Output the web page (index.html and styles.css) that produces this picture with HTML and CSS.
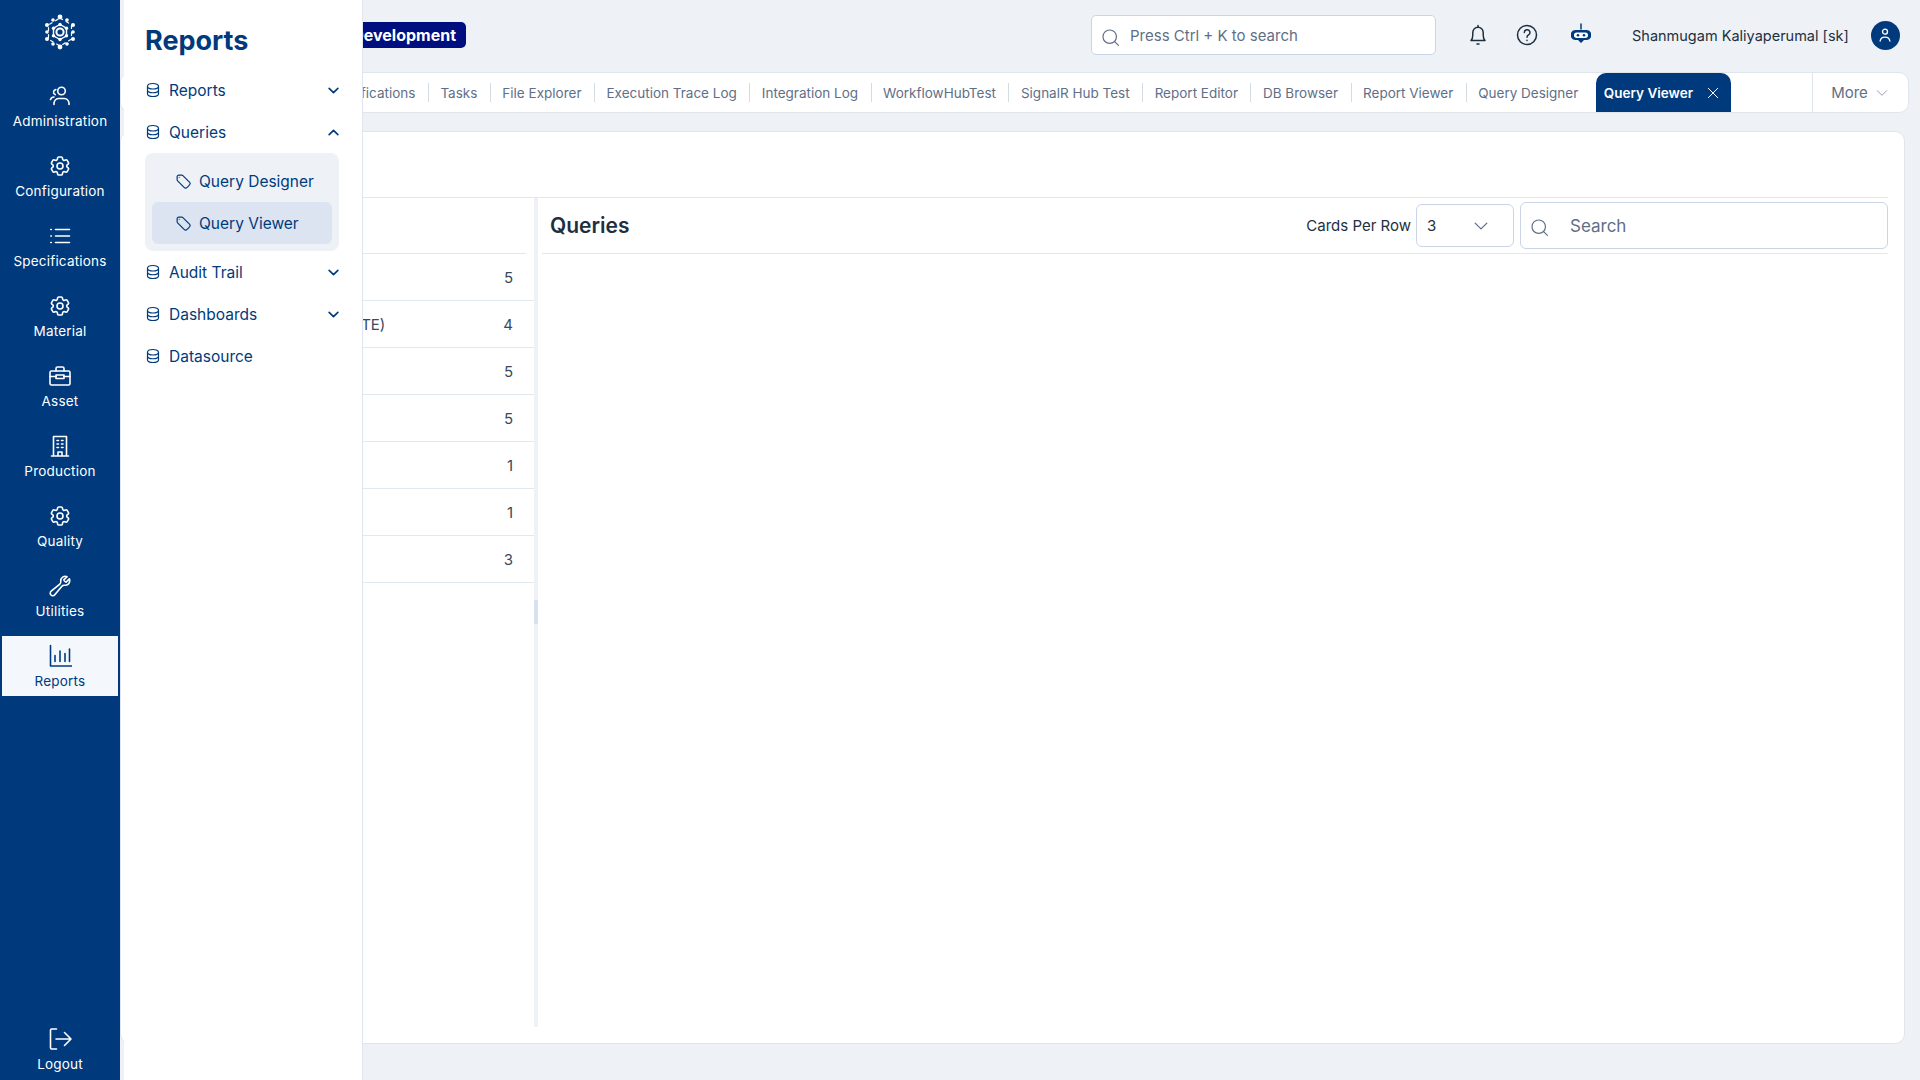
FILE: index.html
```html
<!DOCTYPE html>
<html>
<head>
    <link rel="stylesheet" href="styles.css">
</head>
<body>
<svg class="sprite" xmlns="http://www.w3.org/2000/svg">
    <symbol id="i-gear" viewBox="0 0 24 24">
        <path d="M9.594 3.94c.09-.542.56-.94 1.11-.94h2.593c.55 0 1.02.398 1.11.94l.213 1.281c.063.374.313.686.645.87.074.04.147.083.22.127.325.196.72.257 1.075.124l1.217-.456a1.125 1.125 0 011.37.49l1.296 2.247a1.125 1.125 0 01-.26 1.431l-1.003.827c-.293.24-.438.613-.431.992a6.759 6.759 0 010 .255c-.007.378.138.75.43.99l1.005.828c.424.35.534.954.26 1.43l-1.298 2.247a1.125 1.125 0 01-1.369.491l-1.217-.456c-.355-.133-.75-.072-1.076.124a6.57 6.57 0 01-.22.128c-.331.183-.581.495-.644.869l-.213 1.28c-.09.543-.56.941-1.11.941h-2.594c-.55 0-1.02-.398-1.11-.94l-.213-1.281c-.062-.374-.312-.686-.644-.87a6.52 6.52 0 01-.22-.127c-.325-.196-.72-.257-1.076-.124l-1.217.456a1.125 1.125 0 01-1.369-.49l-1.297-2.247a1.125 1.125 0 01.26-1.431l1.004-.827c.292-.24.437-.613.43-.992a6.932 6.932 0 010-.255c.007-.378-.138-.75-.43-.99l-1.004-.828a1.125 1.125 0 01-.26-1.43l1.297-2.247a1.125 1.125 0 011.37-.491l1.216.456c.356.133.751.072 1.076-.124.072-.044.146-.087.22-.128.332-.183.582-.495.644-.869l.214-1.281z"/>
        <circle cx="12" cy="12" r="3"/>
    </symbol>
    <symbol id="i-users" viewBox="0 0 24 24">
        <circle cx="13.5" cy="7" r="3.8"/>
        <path d="M6 20.5v-1.5a5 5 0 0 1 5-4.5h5a5 5 0 0 1 5 4.5v1.5"/>
        <path d="M7.8 5.6a2.6 2.6 0 0 0-.6 5M2.5 15.500a3.800 3.800 0 0 1 3.500-2.500"/>
    </symbol>
    <symbol id="i-list" viewBox="0 0 24 24">
        <path d="M7.500 5.500h14M7.500 12h14M7.500 18.500h14M2.800 5.500h.6M2.800 12h.6M2.800 18.500h.6"/>
    </symbol>
    <symbol id="i-case" viewBox="0 0 24 24">
        <rect x="2" y="7" width="20" height="14" rx="1.500"/>
        <path d="M8 7V4.500A1.500 1.500 0 0 1 9.500 3h5A1.500 1.500 0 0 1 16 4.500V7M2 12.500h6M16 12.500h6"/>
        <rect x="8" y="11" width="8" height="3.500"/>
    </symbol>
    <symbol id="i-building" viewBox="0 0 24 24">
        <path d="M5.500 22V2.500h13V22M3.500 22h17M10 22v-4h4v4"/>
        <path d="M9 6.500h1.500M13.500 6.500H15M9 10h1.500M13.500 10H15M9 13.500h1.500M13.500 13.500H15"/>
    </symbol>
    <symbol id="i-wrench" viewBox="0 0 24 24">
        <path d="M21.750 6.750a4.500 4.500 0 01-4.884 4.484c-1.076-.091-2.264.071-2.950.904l-7.152 8.684a2.548 2.548 0 11-3.586-3.586l8.684-7.152c.833-.686.995-1.874.904-2.950a4.500 4.500 0 016.336-4.486l-3.276 3.276a3.004 3.004 0 002.250 2.250l3.276-3.276c.256.565.398 1.192.398 1.852z"/>
    </symbol>
    <symbol id="i-chart" viewBox="0 0 24 24">
        <path d="M2.500 1.500v20.500h21M7 17.500v-6M12 17.500V7M17 17.500v-8M21.500 17.500V5"/>
    </symbol>
    <symbol id="i-logout" viewBox="0 0 24 24">
        <path d="M8.500 2H3.700A1.200 1.200 0 0 0 2.500 3.200v17.600A1.200 1.200 0 0 0 3.700 22h4.800M8 12h15M16.500 5.500 23 12l-6.500 6.500"/>
    </symbol>
    <symbol id="i-db" viewBox="0 0 24 24">
        <path d="M20.250 6.375c0 2.278-3.694 4.125-8.250 4.125S3.750 8.653 3.750 6.375m16.500 0c0-2.278-3.694-4.125-8.250-4.125S3.750 4.097 3.750 6.375m16.500 0v11.250c0 2.278-3.694 4.125-8.250 4.125s-8.250-1.847-8.250-4.125V6.375m16.500 5.625c0 2.278-3.694 4.125-8.250 4.125S3.750 14.278 3.750 12"/>
    </symbol>
    <symbol id="i-tag" viewBox="0 0 24 24">
        <path d="M9.568 3H5.250A2.250 2.250 0 003 5.250v4.318c0 .597.237 1.170.659 1.591l9.581 9.581c.699.699 1.780.872 2.607.330a18.095 18.095 0 005.223-5.223c.542-.827.369-1.908-.330-2.607L11.160 3.660A2.250 2.250 0 009.568 3z"/>
        <path d="M6 6h.008v.008H6V6z"/>
    </symbol>
    <symbol id="i-search" viewBox="0 0 24 24">
        <circle cx="11" cy="11" r="8.500"/>
        <path d="M17.500 17.500 22 22"/>
    </symbol>
    <symbol id="i-down" viewBox="0 0 24 24">
        <path d="M5 8.500l7 7 7-7"/>
    </symbol>
</svg>

<div class="app">
    <nav class="rail">
        <div class="rail-logo">
            <svg viewBox="0 0 36 36" width="36" height="36" class="logo">
                <circle cx="18" cy="18" r="3.600" fill="none" stroke="#fff" stroke-width="2"/>
                <path d="M18 4 29.500 10.800V25.200L18 32 6.500 25.200V10.800Z" fill="none" stroke="#fff" stroke-width="1.200" stroke-dasharray="3 4"/>
                <path d="M18 10.500 24.500 14.200V21.800L18 25.500 11.500 21.800V14.200Z" fill="none" stroke="#fff" stroke-width="1.400"/>
                <g fill="#fff">
                    <circle cx="18" cy="3" r="2.400"/><circle cx="18" cy="33" r="2.400"/>
                    <circle cx="11" cy="6" r="1.800"/><circle cx="25" cy="6" r="1.800"/>
                    <circle cx="11" cy="30" r="1.800"/><circle cx="25" cy="30" r="1.800"/>
                    <circle cx="5" cy="11" r="2"/><circle cx="31" cy="11" r="2"/>
                    <circle cx="5" cy="18" r="1.800"/><circle cx="31" cy="18" r="1.800"/>
                    <circle cx="5" cy="25" r="2"/><circle cx="31" cy="25" r="2"/>
                    <circle cx="18" cy="10.500" r="1.700"/><circle cx="18" cy="25.500" r="1.700"/>
                    <circle cx="11.500" cy="14.200" r="1.700"/><circle cx="24.500" cy="14.200" r="1.700"/>
                    <circle cx="11.500" cy="21.800" r="1.700"/><circle cx="24.500" cy="21.800" r="1.700"/>
                </g>
            </svg>
        </div>
        <a class="rail-item"><svg class="rail-icon"><use href="#i-users"/></svg>Administration</a>
        <a class="rail-item"><svg class="rail-icon"><use href="#i-gear"/></svg>Configuration</a>
        <a class="rail-item"><svg class="rail-icon"><use href="#i-list"/></svg>Specifications</a>
        <a class="rail-item"><svg class="rail-icon"><use href="#i-gear"/></svg>Material</a>
        <a class="rail-item"><svg class="rail-icon"><use href="#i-case"/></svg>Asset</a>
        <a class="rail-item"><svg class="rail-icon"><use href="#i-building"/></svg>Production</a>
        <a class="rail-item"><svg class="rail-icon"><use href="#i-gear"/></svg>Quality</a>
        <a class="rail-item"><svg class="rail-icon"><use href="#i-wrench"/></svg>Utilities</a>
        <a class="rail-item active"><svg class="rail-icon"><use href="#i-chart"/></svg>Reports</a>
        <a class="rail-item logout"><svg class="rail-icon"><use href="#i-logout"/></svg>Logout</a>
    </nav>

    <div class="main">
        <header class="topbar">
            <div class="env-wrap"><span class="env-badge">Development</span></div>
            <div class="global-search">
                <svg class="search-icon"><use href="#i-search"/></svg>
                <span>Press Ctrl + K to search</span>
            </div>
            <svg class="top-icon bell" viewBox="0 0 24 24">
                <path d="M5 17.500c1.300-1.300 1.800-3 1.800-5.500V9.500a5.200 5.200 0 0 1 10.400 0V12c0 2.500.5 4.200 1.800 5.500Z"/>
                <path d="M12 2.500v1.800M11 21h2"/>
            </svg>
            <svg class="top-icon help" viewBox="0 0 24 24">
                <circle cx="12" cy="12" r="9.500"/>
                <path d="M9.300 9.500a2.800 2.800 0 1 1 4.200 2.400c-1 .6-1.500 1.100-1.500 2.300M12 17.200v.3"/>
            </svg>
            <svg class="top-icon bot" viewBox="0 0 24 24">
                <path class="bot-line" d="M12 1v5"/>
                <path class="bot-fill" d="M6.500 7h11a5 5 0 0 1 4.500 3v4a5 5 0 0 1-4.500 3H15l-3 3-3-3H6.500A5 5 0 0 1 2 14v-4a5 5 0 0 1 4.500-3Z"/>
                <rect class="bot-eyes" x="5" y="9.500" width="14" height="5.500" rx="2.700"/>
                <circle class="bot-fill" cx="9" cy="12.200" r="1.300"/>
                <circle class="bot-fill" cx="15" cy="12.200" r="1.300"/>
            </svg>
            <span class="user-name">Shanmugam Kaliyaperumal [sk]</span>
            <span class="avatar">
                <svg viewBox="0 0 24 24" width="18" height="18">
                    <circle cx="12" cy="7.500" r="3.300"/>
                    <path d="M5.500 20c.6-3.500 3-5.200 6.500-5.200s5.900 1.700 6.500 5.200"/>
                </svg>
            </span>
        </header>

        <div class="tabbar">
            <div class="tabs">
                <span class="tab">Notifications</span>
                <span class="tab">Tasks</span>
                <span class="tab">File Explorer</span>
                <span class="tab">Execution Trace Log</span>
                <span class="tab">Integration Log</span>
                <span class="tab">WorkflowHubTest</span>
                <span class="tab">SignalR Hub Test</span>
                <span class="tab">Report Editor</span>
                <span class="tab">DB Browser</span>
                <span class="tab">Report Viewer</span>
                <span class="tab">Query Designer</span>
                <span class="tab active">Query Viewer
                    <svg viewBox="0 0 24 24" width="16" height="16"><path d="M5 5l14 14M19 5 5 19"/></svg>
                </span>
            </div>
            <div class="more">More <svg viewBox="0 0 24 24" width="16" height="16"><use href="#i-down"/></svg></div>
        </div>

        <section class="card">
            <div class="card-top"></div>
            <div class="split">
                <aside class="groups">
                    <div class="groups-head"></div>
                    <div class="group-row"><span class="group-name">Reports Queries (DELETE)</span><span>5</span></div>
                    <div class="group-row"><span class="group-name">Reports Queries (DO NOT DELETE)</span><span>4</span></div>
                    <div class="group-row"><span class="group-name">Audit</span><span>5</span></div>
                    <div class="group-row"><span class="group-name">Production</span><span>5</span></div>
                    <div class="group-row"><span class="group-name">Quality</span><span>1</span></div>
                    <div class="group-row"><span class="group-name">Material</span><span>1</span></div>
                    <div class="group-row"><span class="group-name">Asset</span><span>3</span></div>
                </aside>
                <div class="splitter"><div class="handle"></div></div>
                <div class="results">
                    <div class="results-head">
                        <h2>Queries</h2>
                        <span class="cards-label">Cards Per Row</span>
                        <div class="cards-select"><span>3</span><svg viewBox="0 0 24 24" width="20" height="20"><use href="#i-down"/></svg></div>
                        <div class="results-search">
                            <svg class="search-icon"><use href="#i-search"/></svg>
                            <span>Search</span>
                        </div>
                    </div>
                </div>
            </div>
        </section>
    </div>
</div>

<!-- flyout sits on top of the page -->
<div class="flyout">
    <h1>Reports</h1>
    <div class="menu-item"><svg class="db"><use href="#i-db"/></svg><span>Reports</span><svg class="chev"><use href="#i-down"/></svg></div>
    <div class="menu-item"><svg class="db"><use href="#i-db"/></svg><span>Queries</span><svg class="chev up"><use href="#i-down"/></svg></div>
    <div class="submenu">
        <div class="sub-item"><svg class="tag"><use href="#i-tag"/></svg>Query Designer</div>
        <div class="sub-item active"><svg class="tag"><use href="#i-tag"/></svg>Query Viewer</div>
    </div>
    <div class="menu-item"><svg class="db"><use href="#i-db"/></svg><span>Audit Trail</span><svg class="chev"><use href="#i-down"/></svg></div>
    <div class="menu-item"><svg class="db"><use href="#i-db"/></svg><span>Dashboards</span><svg class="chev"><use href="#i-down"/></svg></div>
    <div class="menu-item"><svg class="db"><use href="#i-db"/></svg><span>Datasource</span></div>
</div>
</body>
</html>
```
FILE: styles.css
```css
*{
    margin: 0;
    padding: 0;
    box-sizing: border-box;
}

body {
    width: 1920px;
    height: 1080px;
    overflow: hidden;
    font-family: Inter, "Liberation Sans", sans-serif;
    background-color: #eef2f7;
    color: #1e2f40;
}

svg {
    fill: none;
    stroke: currentColor;
    stroke-linecap: round;
    stroke-linejoin: round;
}

.sprite {
    display: none;
}

.app {
    display: flex;
    height: 1080px;
}

/* left rail */
.rail {
    width: 120px;
    flex-shrink: 0;
    background: #003a7d;
    color: #fff;
    display: flex;
    flex-direction: column;
    align-items: center;
    padding-top: 14px;
}

.rail-logo {
    height: 62px;
}

.logo {
    stroke: none;
}

.rail-item {
    width: 116px;
    height: 60px;
    margin-bottom: 10px;
    display: flex;
    flex-direction: column;
    align-items: center;
    justify-content: center;
    gap: 5px;
    font-size: 13.5px;
    line-height: 16px;
    letter-spacing: 0.2px;
}

.rail-item.active {
    background: #f4f8fc;
    color: #003a7d;
}

.rail-item.logout {
    margin-top: auto;
    margin-bottom: 1px;
}

.rail-icon {
    width: 24px;
    height: 24px;
    stroke-width: 1.600;
}

/* page */
.main {
    flex: 1;
    min-width: 0;
    display: flex;
    flex-direction: column;
}

.topbar {
    height: 72px;
    flex-shrink: 0;
    display: flex;
    align-items: center;
    padding-bottom: 2px;
}

.env-wrap {
    width: 971px;
    flex-shrink: 0;
    display: flex;
    justify-content: flex-end;
    padding-right: 625px;
}

.env-badge {
    background: #000f80;
    color: #fff;
    font-size: 16px;
    font-weight: 700;
    line-height: 26px;
    padding: 0 10px;
    border-radius: 5px;
}

.global-search {
    width: 345px;
    height: 40px;
    background: #fff;
    border: 1px solid #c9d5e5;
    border-radius: 5px;
    display: flex;
    align-items: center;
    padding-left: 9px;
    gap: 10px;
    font-size: 15px;
    color: #5f6f88;
}

.search-icon {
    width: 19px;
    height: 19px;
    stroke-width: 1.500;
    color: #5f6f88;
    margin-top: 4px;
}

.top-icon {
    width: 24px;
    height: 24px;
    stroke-width: 1.500;
    color: #1e2f40;
}

.bell {
    margin-left: 30px;
}

.help {
    margin-left: 25px;
}

.bot {
    margin-left: 30px;
}

.bot-line {
    stroke: #003a7d;
    stroke-width: 1.500;
}

.bot-fill {
    fill: #003a7d;
    stroke: none;
}

.bot-eyes {
    fill: #fff;
    stroke: none;
}

.user-name {
    margin-left: 39px;
    font-size: 14.500px;
    color: #1e2f40;
    white-space: nowrap;
}

.avatar {
    margin-left: 22px;
    width: 29px;
    height: 29px;
    border-radius: 50%;
    background: #003a7d;
    color: #fff;
    display: flex;
    align-items: center;
    justify-content: center;
    stroke-width: 1.800;
}

.avatar svg {
    stroke-width: 1.800;
}

.tabbar {
    height: 41px;
    flex-shrink: 0;
    width: 1789px;
    background: #fff;
    border: 1px solid #dfe5ed;
    border-radius: 10px;
    display: flex;
    overflow: hidden;
}

.tabs {
    flex: 1;
    min-width: 0;
    display: flex;
    justify-content: flex-end;
    align-items: stretch;
    padding-right: 81px;
    overflow: hidden;
}

.tab {
    display: flex;
    align-items: center;
    position: relative;
    flex-shrink: 0;
    padding: 0 12.500px;
    font-size: 13.500px;
    color: #5f6f88;
    white-space: nowrap;
}

.tab + .tab::before {
    content: "";
    position: absolute;
    left: 0;
    top: 10px;
    bottom: 10px;
    width: 1px;
    background: #d5dbe3;
}

.tab.active {
    background: #003a7d;
    color: #fff;
    font-weight: 600;
    border-radius: 10px 10px 0 0;
    gap: 12px;
    padding: 0 10px 0 8px;
    margin-left: 5px;
}

.tab.active::before {
    display: none;
}

.tab.active svg {
    stroke-width: 1.500;
}

.more {
    width: 96px;
    flex-shrink: 0;
    border-left: 1px solid #dfe5ed;
    display: flex;
    align-items: center;
    justify-content: center;
    gap: 6px;
    font-size: 15px;
    color: #5f6f88;
}

.card {
    margin-top: 18px;
    width: 1785px;
    height: 913px;
    background: #fff;
    border: 1px solid #dfe5ed;
    border-radius: 10px;
    padding: 0 16px;
    display: flex;
    flex-direction: column;
}

.card-top {
    height: 66px;
    flex-shrink: 0;
    border-bottom: 1px solid #e1e8f0;
}

.split {
    display: flex;
    height: 829px;
}

.groups {
    width: 397px;
    flex-shrink: 0;
}

.groups-head {
    height: 56px;
    margin-right: 8px;
    border-bottom: 1px solid #e1e8f0;
}

.group-row {
    height: 47px;
    display: flex;
    align-items: center;
    justify-content: space-between;
    padding-right: 21px;
    border-bottom: 1.500px solid #e1e8f0;
    font-size: 15px;
    color: #3a4a5c;
}

.group-row:first-of-type {
    height: 51px;
}

.group-name {
    white-space: nowrap;
}

.splitter {
    width: 4px;
    flex-shrink: 0;
    background: #eef2f7;
    padding-top: 402px;
}

.handle {
    height: 24px;
    background: #d8e2ef;
}

.results {
    flex: 1;
    padding-left: 4px;
}

.results-head {
    height: 56px;
    border-bottom: 1px solid #e1e8f0;
    display: flex;
    align-items: center;
    padding-left: 8px;
}

.results-head h2 {
    flex: 1;
    font-size: 21px;
    font-weight: 600;
    color: #1e3040;
}

.cards-label {
    font-size: 15px;
    margin-right: 5px;
}

.cards-select {
    width: 98px;
    height: 43px;
    border: 1px solid #c9d5e5;
    border-radius: 6px;
    display: flex;
    align-items: center;
    justify-content: space-between;
    padding: 0 22px 0 10px;
    font-size: 15px;
}

.cards-select svg {
    color: #5f6f88;
    stroke-width: 1.500;
}

.results-search {
    margin-left: 6px;
    width: 368px;
    height: 47px;
    border: 1px solid #c9d5e5;
    border-radius: 6px;
    display: flex;
    align-items: center;
    padding-left: 9px;
    gap: 21px;
    font-size: 17px;
    color: #5f6f88;
}

/* flyout */
.flyout {
    position: absolute;
    left: 124px;
    top: 0;
    width: 239px;
    height: 1080px;
    background: #fff;
    border-right: 1px solid #dfe6ef;
    padding: 22px 21px 0 21px;
    color: #003a7d;
}

.flyout h1 {
    font-size: 27px;
    line-height: 38px;
    font-weight: 700;
    margin-bottom: 9px;
}

.menu-item {
    height: 42px;
    display: flex;
    align-items: center;
    font-size: 15.500px;
}

.menu-item span {
    flex: 1;
}

.db {
    width: 16px;
    height: 16px;
    margin-right: 8px;
    stroke-width: 1.800;
}

.chev {
    width: 15px;
    height: 15px;
    stroke-width: 2.600;
}

.chev.up {
    transform: rotate(180deg);
}

.submenu {
    background: #eef2f7;
    border-radius: 8px;
    margin: 0 2px 0 0;
    padding: 7px;
    height: 98px;
    margin-top: 0;
}

.sub-item {
    height: 42px;
    display: flex;
    align-items: center;
    padding-left: 23px;
    gap: 7px;
    border-radius: 6px;
    font-size: 15.500px;
}

.sub-item.active {
    background: #dbe4f0;
}

.tag {
    width: 17px;
    height: 17px;
    stroke-width: 1.700;
}
```
